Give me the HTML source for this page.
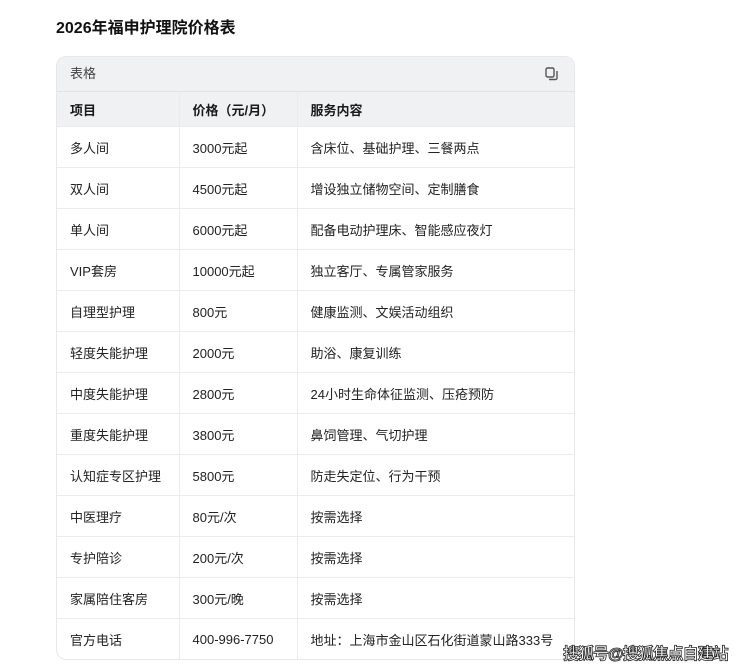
<!DOCTYPE html>
<html><head><meta charset="utf-8"><style>
body{margin:0;background:#fff;width:740px;height:668px;overflow:hidden;font-family:"Liberation Sans","Noto Sans CJK SC",sans-serif;color:#222;position:relative}
h1{position:absolute;left:56px;top:17px;margin:0;font-size:16px;font-weight:bold;color:#111;line-height:24px}
.card{position:absolute;left:56px;top:56px;width:517px;border:1px solid #e8e8ea;border-radius:10px;overflow:hidden;background:#fff}
.bar{height:34px;background:#f0f1f3;border-bottom:1px solid #e3e3e6;position:relative;font-size:13px;color:#444;line-height:34px;padding-left:13px}
.bar svg{position:absolute;right:15px;top:10px}
table{border-collapse:collapse;width:100%;font-size:13px}
td,th{border-right:1px solid #ececee;border-bottom:1px solid #ececee;padding:0 0 0 13px;height:40px;text-align:left;white-space:nowrap}
td:last-child,th:last-child{border-right:none}
tr:last-child td{border-bottom:none}
th{background:#f0f1f3;font-weight:bold;height:34px;color:#1a1a1a}
.wm{position:absolute;left:563px;top:640px;font-size:16px;font-weight:bold;color:#fff;-webkit-text-stroke:0.8px #222;letter-spacing:-1px;white-space:nowrap}
</style></head><body>
<h1>2026年福申护理院价格表</h1>
<div class="card">
<div class="bar">表格<svg width="14" height="14" viewBox="0 0 14 14" fill="none" stroke="#555" stroke-width="1.4"><rect x="1" y="1" width="8" height="9" rx="1.5"/><path d="M4 12.5h6.5a1.5 1.5 0 0 0 1.5-1.5V4"/></svg></div>
<table>
<colgroup><col style="width:122px"><col style="width:118px"><col></colgroup>
<tr><th>项目</th><th>价格（元/月）</th><th>服务内容</th></tr>
<tr><td>多人间</td><td>3000元起</td><td>含床位、基础护理、三餐两点</td></tr>
<tr><td>双人间</td><td>4500元起</td><td>增设独立储物空间、定制膳食</td></tr>
<tr><td>单人间</td><td>6000元起</td><td>配备电动护理床、智能感应夜灯</td></tr>
<tr><td>VIP套房</td><td>10000元起</td><td>独立客厅、专属管家服务</td></tr>
<tr><td>自理型护理</td><td>800元</td><td>健康监测、文娱活动组织</td></tr>
<tr><td>轻度失能护理</td><td>2000元</td><td>助浴、康复训练</td></tr>
<tr><td>中度失能护理</td><td>2800元</td><td>24小时生命体征监测、压疮预防</td></tr>
<tr><td>重度失能护理</td><td>3800元</td><td>鼻饲管理、气切护理</td></tr>
<tr><td>认知症专区护理</td><td>5800元</td><td>防走失定位、行为干预</td></tr>
<tr><td>中医理疗</td><td>80元/次</td><td>按需选择</td></tr>
<tr><td>专护陪诊</td><td>200元/次</td><td>按需选择</td></tr>
<tr><td>家属陪住客房</td><td>300元/晚</td><td>按需选择</td></tr>
<tr><td>官方电话</td><td>400-996-7750</td><td>地址：上海市金山区石化街道蒙山路333号</td></tr>
</table>
</div>
<div class="wm">搜狐号@搜狐焦点自建站</div>
</body></html>
